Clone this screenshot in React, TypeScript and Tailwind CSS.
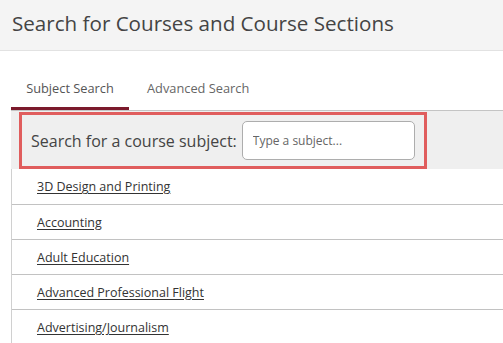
const SUBJECTS = [
  "3D Design and Printing",
  "Accounting",
  "Adult Education",
  "Advanced Professional Flight",
  "Advertising/Journalism",
];

export default function App() {
  return (
    <div className="h-[343px] w-[503px] overflow-hidden bg-white font-['Open_Sans',sans-serif]">
      <header className="flex h-[51px] items-center border-b border-[#e2e2e2] bg-[#f4f4f4] pl-3">
        <h1 className="pb-[4px] text-[20.6px] leading-none text-[#444]">
          Search for Courses and Course Sections
        </h1>
      </header>

      <div className="pl-[11px]">
        <nav className="mt-[20px] flex border-b border-[#c4c4c4] text-[12.8px]">
          <button className="h-[39px] w-[118px] border-b-[3px] border-[#7b1a2c] text-[#555]">
            Subject Search
          </button>
          <button className="h-[39px] px-[18px] pb-[3px] text-[#666]">Advanced Search</button>
        </nav>

        <div className="bg-[#efefef] pl-[8px] pt-[1px]">
          <div className="flex h-[57px] w-[408px] items-center gap-[5px] border-[3px] border-[#e05d5d] pl-[9px]">
            <label className="text-[16px] text-[#444]">Search for a course subject:</label>
            <input
              placeholder="Type a subject..."
              className="h-[39px] w-[173px] rounded-[5px] border border-[#adadad] bg-white px-[10px] text-[12px] text-[#444] outline-none placeholder:text-[#666]"
            />
          </div>
        </div>

        <ul className="border-l border-[#d0d0d0]">
          {SUBJECTS.map((s, i) => (
            <li
              key={s}
              className={`flex items-center border-b border-[#c2c2c2] pl-[25px] pt-[2px] ${
                i === 0 ? "h-[36px]" : "h-[35px]"
              }`}
            >
              <a href="#" className="text-[12.5px] text-[#333] underline underline-offset-2">
                {s}
              </a>
            </li>
          ))}
        </ul>
      </div>
    </div>
  );
}
